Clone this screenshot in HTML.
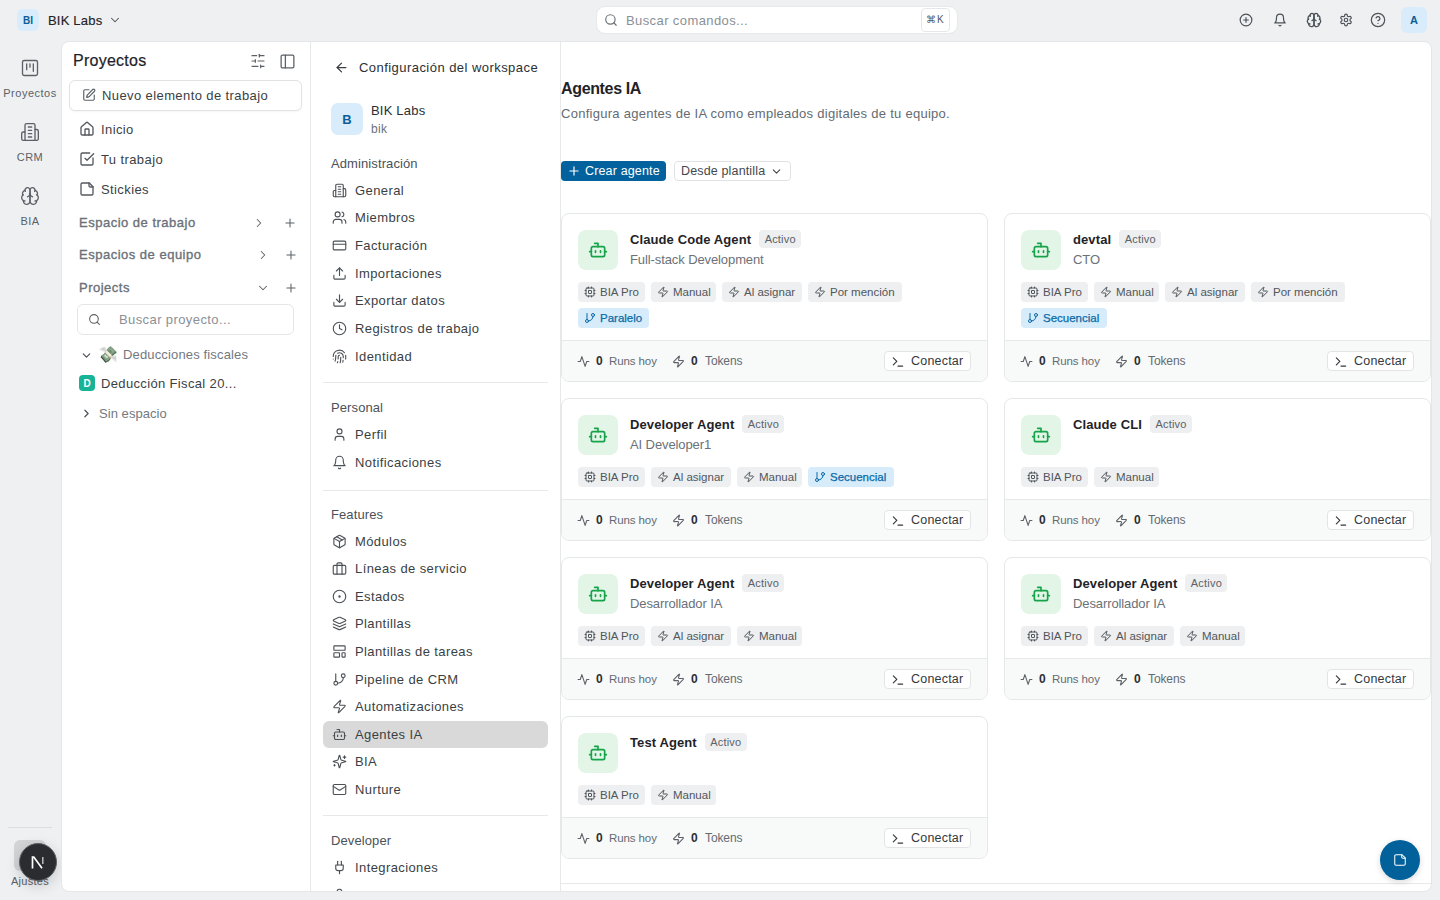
<!DOCTYPE html>
<html><head><meta charset="utf-8"><style>
*{box-sizing:border-box;margin:0;padding:0}
html,body{width:1440px;height:900px;overflow:hidden;background:#eff0f2;font-family:"Liberation Sans",sans-serif;}
.box{position:absolute}
.t{position:absolute;white-space:nowrap}
.ic{position:absolute;overflow:visible}
.card{position:absolute;border:1px solid #e5e8e8;border-radius:8px;background:#fff}
.tag{position:absolute;height:20px;border-radius:4px;display:flex;align-items:center;padding-left:6px;font-size:11.5px;letter-spacing:0px;white-space:nowrap}
.tag svg{width:12px;height:12px;margin-right:4px;flex:none}
</style></head><body>
<div class="box" style="left:17px;top:9px;width:22px;height:22px;border-radius:6px;background:#d8ecfb;"></div>
<div class="t " style="left:17px;top:13.5px;font-size:10px;line-height:13px;color:#0b5f98;font-weight:700;letter-spacing:0px;width:22px;text-align:center;">BI</div>
<div class="t " style="left:48px;top:11.5px;font-size:13px;line-height:17px;color:#1f2328;font-weight:400;letter-spacing:0.2px;-webkit-text-stroke:0.15px #1f2328;">BIK Labs</div>
<svg class="ic" style="left:108px;top:13px;width:14px;height:14px;color:#4b5157;" viewBox="0 0 24 24" fill="none" stroke="currentColor" stroke-width="1.8" stroke-linecap="round" stroke-linejoin="round"><path d="m6 9 6 6 6-6"/></svg>
<div class="box" style="left:596px;top:6px;width:362px;height:27.5px;border:1px solid #e6e8e9;border-radius:9px;background:#fff;"></div>
<svg class="ic" style="left:604px;top:13px;width:14px;height:14px;color:#6b7178;" viewBox="0 0 24 24" fill="none" stroke="currentColor" stroke-width="2" stroke-linecap="round" stroke-linejoin="round"><circle cx="11" cy="11" r="8"/><path d="m21 21-4.3-4.3"/></svg>
<div class="t " style="left:626px;top:11.5px;font-size:13px;line-height:17px;color:#8a9097;font-weight:400;letter-spacing:0.4px;">Buscar comandos...</div>
<div class="box" style="left:921px;top:8px;width:28.5px;height:23.5px;border:1px solid #e6e7ea;border-radius:4px;background:#fff;"></div>
<div class="t " style="left:921px;top:12.5px;font-size:10px;line-height:13px;color:#55595e;font-weight:400;letter-spacing:0.5px;width:28.5px;text-align:center;">⌘K</div>
<svg class="ic" style="left:1239.0px;top:13.0px;width:14px;height:14px;color:#4b5157;" viewBox="0 0 24 24" fill="none" stroke="currentColor" stroke-width="2" stroke-linecap="round" stroke-linejoin="round"><circle cx="12" cy="12" r="10"/><path d="M8 12h8"/><path d="M12 8v8"/></svg>
<svg class="ic" style="left:1273.0px;top:13.0px;width:14px;height:14px;color:#4b5157;" viewBox="0 0 24 24" fill="none" stroke="currentColor" stroke-width="2" stroke-linecap="round" stroke-linejoin="round"><path d="M6 8a6 6 0 0 1 12 0c0 7 3 9 3 9H3s3-2 3-9"/><path d="M10.3 21a1.94 1.94 0 0 0 3.4 0"/></svg>
<svg class="ic" style="left:1306.0px;top:12.0px;width:16px;height:16px;color:#4b5157;" viewBox="0 0 24 24" fill="none" stroke="currentColor" stroke-width="2" stroke-linecap="round" stroke-linejoin="round"><path d="M12 5a3 3 0 1 0-5.997.125 4 4 0 0 0-2.526 5.77 4 4 0 0 0 .556 6.588A4 4 0 1 0 12 18Z"/><path d="M12 5a3 3 0 1 1 5.997.125 4 4 0 0 1 2.526 5.77 4 4 0 0 1-.556 6.588A4 4 0 1 1 12 18Z"/><path d="M15 13a4.5 4.5 0 0 1-3-4 4.5 4.5 0 0 1-3 4"/><path d="M17.599 6.5a3 3 0 0 0 .399-1.375"/><path d="M6.003 5.125A3 3 0 0 0 6.401 6.5"/><path d="M3.477 10.896a4 4 0 0 1 .585-.396"/><path d="M19.938 10.5a4 4 0 0 1 .585.396"/><path d="M6 18a4 4 0 0 1-1.967-.516"/><path d="M19.967 17.484A4 4 0 0 1 18 18"/></svg>
<svg class="ic" style="left:1339.0px;top:13.0px;width:14px;height:14px;color:#4b5157;" viewBox="0 0 24 24" fill="none" stroke="currentColor" stroke-width="2" stroke-linecap="round" stroke-linejoin="round"><path d="M12.22 2h-.44a2 2 0 0 0-2 2v.18a2 2 0 0 1-1 1.73l-.43.25a2 2 0 0 1-2 0l-.15-.08a2 2 0 0 0-2.73.73l-.22.38a2 2 0 0 0 .73 2.73l.15.1a2 2 0 0 1 1 1.72v.51a2 2 0 0 1-1 1.74l-.15.09a2 2 0 0 0-.73 2.73l.22.38a2 2 0 0 0 2.730.73l.15-.08a2 2 0 0 1 2 0l.43.25a2 2 0 0 1 1 1.73V20a2 2 0 0 0 2 2h.44a2 2 0 0 0 2-2v-.18a2 2 0 0 1 1-1.73l.43-.25a2 2 0 0 1 2 0l.15.08a2 2 0 0 0 2.73-.73l.22-.39a2 2 0 0 0-.73-2.73l-.15-.08a2 2 0 0 1-1-1.74v-.5a2 2 0 0 1 1-1.74l.15-.09a2 2 0 0 0 .73-2.73l-.22-.38a2 2 0 0 0-2.73-.73l-.15.08a2 2 0 0 1-2 0l-.43-.25a2 2 0 0 1-1-1.73V4a2 2 0 0 0-2-2z"/><circle cx="12" cy="12" r="3"/></svg>
<svg class="ic" style="left:1370.0px;top:12.0px;width:16px;height:16px;color:#4b5157;" viewBox="0 0 24 24" fill="none" stroke="currentColor" stroke-width="1.8" stroke-linecap="round" stroke-linejoin="round"><circle cx="12" cy="12" r="10"/><path d="M9.09 9a3 3 0 0 1 5.83 1c0 2-3 3-3 3"/><path d="M12 17h.01"/></svg>
<div class="box" style="left:1401px;top:7px;width:26px;height:26px;border-radius:6px;background:#d8ecfb;"></div>
<div class="t " style="left:1401px;top:13.0px;font-size:11px;line-height:14px;color:#0b5f98;font-weight:700;letter-spacing:0px;width:26px;text-align:center;">A</div>
<svg class="ic" style="left:20px;top:57.5px;width:20px;height:20px;color:#5b6167;" viewBox="0 0 24 24" fill="none" stroke="currentColor" stroke-width="1.6" stroke-linecap="round" stroke-linejoin="round"><rect width="18" height="18" x="3" y="3" rx="2"/><path d="M8 7v7"/><path d="M12 7v4"/><path d="M16 7v9"/></svg>
<div class="t " style="left:0px;top:86.0px;font-size:11px;line-height:14px;color:#5b6167;font-weight:400;letter-spacing:0.5px;width:60px;text-align:center;">Proyectos</div>
<svg class="ic" style="left:20px;top:121.5px;width:20px;height:20px;color:#5b6167;" viewBox="0 0 24 24" fill="none" stroke="currentColor" stroke-width="1.6" stroke-linecap="round" stroke-linejoin="round"><path d="M6 22V4a2 2 0 0 1 2-2h8a2 2 0 0 1 2 2v18Z"/><path d="M6 12H4a2 2 0 0 0-2 2v6a2 2 0 0 0 2 2h2"/><path d="M18 9h2a2 2 0 0 1 2 2v9a2 2 0 0 1-2 2h-2"/><path d="M10 6h4"/><path d="M10 10h4"/><path d="M10 14h4"/><path d="M10 18h4"/></svg>
<div class="t " style="left:0px;top:150.0px;font-size:11px;line-height:14px;color:#5b6167;font-weight:400;letter-spacing:0.5px;width:60px;text-align:center;">CRM</div>
<svg class="ic" style="left:20px;top:185.5px;width:20px;height:20px;color:#5b6167;" viewBox="0 0 24 24" fill="none" stroke="currentColor" stroke-width="1.6" stroke-linecap="round" stroke-linejoin="round"><path d="M12 5a3 3 0 1 0-5.997.125 4 4 0 0 0-2.526 5.77 4 4 0 0 0 .556 6.588A4 4 0 1 0 12 18Z"/><path d="M12 5a3 3 0 1 1 5.997.125 4 4 0 0 1 2.526 5.77 4 4 0 0 1-.556 6.588A4 4 0 1 1 12 18Z"/><path d="M15 13a4.5 4.5 0 0 1-3-4 4.5 4.5 0 0 1-3 4"/><path d="M17.599 6.5a3 3 0 0 0 .399-1.375"/><path d="M6.003 5.125A3 3 0 0 0 6.401 6.5"/><path d="M3.477 10.896a4 4 0 0 1 .585-.396"/><path d="M19.938 10.5a4 4 0 0 1 .585.396"/><path d="M6 18a4 4 0 0 1-1.967-.516"/><path d="M19.967 17.484A4 4 0 0 1 18 18"/></svg>
<div class="t " style="left:0px;top:214.0px;font-size:11px;line-height:14px;color:#5b6167;font-weight:400;letter-spacing:0.5px;width:60px;text-align:center;">BIA</div>
<div class="box" style="left:8px;top:827px;width:44px;height:1px;background:#dcdee1;"></div>
<div class="box" style="left:14px;top:840px;width:32px;height:31px;border-radius:6px;background:#d4d5d7;"></div>
<div class="t " style="left:0px;top:874.0px;font-size:11px;line-height:14px;color:#5b6167;font-weight:400;letter-spacing:0.3px;width:60px;text-align:center;">Ajustes</div>
<div class="box" style="left:19px;top:843px;width:38px;height:38px;border-radius:50%;background:#2a2c2f;border:1px solid #5c5f63;box-shadow:0 4px 14px rgba(0,0,0,.18);"></div>
<svg class="ic" style="left:31px;top:856px;width:14px;height:13px" viewBox="0 0 14 13"><path d="M1.5 12.5V1h1.3l8.2 11.2" stroke="#fff" stroke-width="1.7" fill="none"/><path d="M11.8 1v7" stroke="#bbb" stroke-width="1.5"/></svg>
<div class="box" style="left:61px;top:41px;width:1371px;height:851px;border:1px solid #e4e6e7;border-radius:8px;background:#fff;"></div>
<div class="box" style="left:0;top:0;width:1440px;height:900px;clip-path:inset(42px 9px 9px 62px round 7px);">
<div class="box" style="left:310px;top:42px;width:1px;height:849px;background:#e7e9e9;"></div>
<div class="box" style="left:560px;top:42px;width:1px;height:849px;background:#e7e9e9;"></div>
<div class="t " style="left:73px;top:50.0px;font-size:16px;line-height:21px;color:#1f2328;font-weight:400;letter-spacing:0.25px;-webkit-text-stroke:0.2px #1f2328;">Proyectos</div>
<svg class="ic" style="left:250px;top:53px;width:16px;height:16px;color:#5b6167;" viewBox="0 0 24 24" fill="none" stroke="currentColor" stroke-width="1.8" stroke-linecap="round" stroke-linejoin="round"><line x1="21" x2="14" y1="4" y2="4"/><line x1="10" x2="3" y1="4" y2="4"/><line x1="21" x2="12" y1="12" y2="12"/><line x1="8" x2="3" y1="12" y2="12"/><line x1="21" x2="16" y1="20" y2="20"/><line x1="12" x2="3" y1="20" y2="20"/><line x1="14" x2="14" y1="2" y2="6"/><line x1="8" x2="8" y1="10" y2="14"/><line x1="16" x2="16" y1="18" y2="22"/></svg>
<svg class="ic" style="left:279px;top:53px;width:17px;height:17px;color:#5b6167;" viewBox="0 0 24 24" fill="none" stroke="currentColor" stroke-width="1.8" stroke-linecap="round" stroke-linejoin="round"><rect width="18" height="18" x="3" y="3" rx="2"/><path d="M9 3v18"/></svg>
<div class="box" style="left:69px;top:79.5px;width:233px;height:31px;border:1px solid #e0e2e3;border-radius:6px;background:#fff;box-shadow:0 1px 2px rgba(0,0,0,.04);"></div>
<svg class="ic" style="left:82px;top:88px;width:14px;height:14px;color:#5b6167;" viewBox="0 0 24 24" fill="none" stroke="currentColor" stroke-width="2" stroke-linecap="round" stroke-linejoin="round"><path d="M12 3H5a2 2 0 0 0-2 2v14a2 2 0 0 0 2 2h14a2 2 0 0 0 2-2v-7"/><path d="M18.375 2.625a1 1 0 0 1 3 3l-9.013 9.014a2 2 0 0 1-.853.505l-2.873.84a.5.5 0 0 1-.62-.62l.84-2.873a2 2 0 0 1 .506-.852z"/></svg>
<div class="t " style="left:102px;top:87.0px;font-size:13px;line-height:17px;color:#3a3f44;font-weight:400;letter-spacing:0.4px;">Nuevo elemento de trabajo</div>
<svg class="ic" style="left:79px;top:121px;width:16px;height:16px;color:#53595f;" viewBox="0 0 24 24" fill="none" stroke="currentColor" stroke-width="2" stroke-linecap="round" stroke-linejoin="round"><path d="M15 21v-8a1 1 0 0 0-1-1h-4a1 1 0 0 0-1 1v8"/><path d="M3 10a2 2 0 0 1 .709-1.528l7-5.999a2 2 0 0 1 2.582 0l7 5.999A2 2 0 0 1 21 10v9a2 2 0 0 1-2 2H5a2 2 0 0 1-2-2z"/></svg>
<div class="t " style="left:101px;top:120.5px;font-size:13px;line-height:17px;color:#3a3f44;font-weight:400;letter-spacing:0.4px;">Inicio</div>
<svg class="ic" style="left:79px;top:151px;width:16px;height:16px;color:#53595f;" viewBox="0 0 24 24" fill="none" stroke="currentColor" stroke-width="2" stroke-linecap="round" stroke-linejoin="round"><path d="M21 10.5V19a2 2 0 0 1-2 2H5a2 2 0 0 1-2-2V5a2 2 0 0 1 2-2h11"/><path d="m9 11 3 3L22 4"/></svg>
<div class="t " style="left:101px;top:150.5px;font-size:13px;line-height:17px;color:#3a3f44;font-weight:400;letter-spacing:0.4px;">Tu trabajo</div>
<svg class="ic" style="left:79px;top:181px;width:16px;height:16px;color:#53595f;" viewBox="0 0 24 24" fill="none" stroke="currentColor" stroke-width="2" stroke-linecap="round" stroke-linejoin="round"><path d="M15.5 3H5a2 2 0 0 0-2 2v14c0 1.1.9 2 2 2h14a2 2 0 0 0 2-2V8.5L15.5 3Z"/><path d="M15 3v4a2 2 0 0 0 2 2h4"/></svg>
<div class="t " style="left:101px;top:180.5px;font-size:13px;line-height:17px;color:#3a3f44;font-weight:400;letter-spacing:0.4px;">Stickies</div>
<div class="t " style="left:79px;top:214.0px;font-size:13px;line-height:17px;color:#6b7178;font-weight:400;letter-spacing:0.5px;-webkit-text-stroke:0.35px #6b7178;">Espacio de trabajo</div>
<svg class="ic" style="left:252px;top:215.5px;width:14px;height:14px;color:#5b6167;" viewBox="0 0 24 24" fill="none" stroke="currentColor" stroke-width="1.8" stroke-linecap="round" stroke-linejoin="round"><path d="m9 18 6-6-6-6"/></svg>
<svg class="ic" style="left:283px;top:215.5px;width:14px;height:14px;color:#5b6167;" viewBox="0 0 24 24" fill="none" stroke="currentColor" stroke-width="1.8" stroke-linecap="round" stroke-linejoin="round"><path d="M5 12h14"/><path d="M12 5v14"/></svg>
<div class="t " style="left:79px;top:246.0px;font-size:13px;line-height:17px;color:#6b7178;font-weight:400;letter-spacing:0.5px;-webkit-text-stroke:0.35px #6b7178;">Espacios de equipo</div>
<svg class="ic" style="left:256px;top:247.5px;width:14px;height:14px;color:#5b6167;" viewBox="0 0 24 24" fill="none" stroke="currentColor" stroke-width="1.8" stroke-linecap="round" stroke-linejoin="round"><path d="m9 18 6-6-6-6"/></svg>
<svg class="ic" style="left:284px;top:247.5px;width:14px;height:14px;color:#5b6167;" viewBox="0 0 24 24" fill="none" stroke="currentColor" stroke-width="1.8" stroke-linecap="round" stroke-linejoin="round"><path d="M5 12h14"/><path d="M12 5v14"/></svg>
<div class="t " style="left:79px;top:279.0px;font-size:13px;line-height:17px;color:#6b7178;font-weight:400;letter-spacing:0.5px;-webkit-text-stroke:0.35px #6b7178;">Projects</div>
<svg class="ic" style="left:256px;top:280.5px;width:14px;height:14px;color:#5b6167;" viewBox="0 0 24 24" fill="none" stroke="currentColor" stroke-width="1.8" stroke-linecap="round" stroke-linejoin="round"><path d="m6 9 6 6 6-6"/></svg>
<svg class="ic" style="left:284px;top:280.5px;width:14px;height:14px;color:#5b6167;" viewBox="0 0 24 24" fill="none" stroke="currentColor" stroke-width="1.8" stroke-linecap="round" stroke-linejoin="round"><path d="M5 12h14"/><path d="M12 5v14"/></svg>
<div class="box" style="left:77px;top:303.5px;width:217px;height:31.5px;border:1px solid #e5e7e7;border-radius:6px;background:#fff;"></div>
<svg class="ic" style="left:88px;top:313px;width:13px;height:13px;color:#5b6167;" viewBox="0 0 24 24" fill="none" stroke="currentColor" stroke-width="2" stroke-linecap="round" stroke-linejoin="round"><circle cx="11" cy="11" r="8"/><path d="m21 21-4.3-4.3"/></svg>
<div class="t " style="left:119px;top:311.0px;font-size:13px;line-height:17px;color:#8a9097;font-weight:400;letter-spacing:0.4px;">Buscar proyecto...</div>
<svg class="ic" style="left:79.5px;top:348.5px;width:13px;height:13px;color:#4b5157;" viewBox="0 0 24 24" fill="none" stroke="currentColor" stroke-width="2.2" stroke-linecap="round" stroke-linejoin="round"><path d="m6 9 6 6 6-6"/></svg>
<div class="t" style="left:97.5px;top:344.5px;font-size:16px;line-height:20px;filter:saturate(0.35);">💸</div>
<div class="t " style="left:123px;top:346.0px;font-size:13px;line-height:17px;color:#73797f;font-weight:400;letter-spacing:0.15px;">Deducciones fiscales</div>
<div class="box" style="left:79px;top:375px;width:16px;height:16px;border-radius:4px;background:#17b397;"></div>
<div class="t " style="left:79px;top:376.5px;font-size:10px;line-height:13px;color:#fff;font-weight:700;letter-spacing:0px;width:16px;text-align:center;">D</div>
<div class="t " style="left:101px;top:374.5px;font-size:13px;line-height:17px;color:#3a3f44;font-weight:400;letter-spacing:0.35px;">Deducción Fiscal 20...</div>
<svg class="ic" style="left:79.5px;top:407px;width:13px;height:13px;color:#4b5157;" viewBox="0 0 24 24" fill="none" stroke="currentColor" stroke-width="2.2" stroke-linecap="round" stroke-linejoin="round"><path d="m9 18 6-6-6-6"/></svg>
<div class="t " style="left:99px;top:404.5px;font-size:13px;line-height:17px;color:#73797f;font-weight:400;letter-spacing:0.05px;">Sin espacio</div>
<svg class="ic" style="left:333.5px;top:60px;width:15px;height:15px;color:#3a3f44;" viewBox="0 0 24 24" fill="none" stroke="currentColor" stroke-width="2" stroke-linecap="round" stroke-linejoin="round"><path d="m12 19-7-7 7-7"/><path d="M19 12H5"/></svg>
<div class="t " style="left:359px;top:59.0px;font-size:13px;line-height:17px;color:#2b3035;font-weight:400;letter-spacing:0.45px;">Configuración del workspace</div>
<div class="box" style="left:331px;top:103px;width:32px;height:32px;border-radius:7px;background:#d8ecfb;"></div>
<div class="t " style="left:331px;top:110.5px;font-size:13px;line-height:17px;color:#0b5f98;font-weight:700;letter-spacing:0px;width:32px;text-align:center;">B</div>
<div class="t " style="left:371px;top:102.0px;font-size:13px;line-height:17px;color:#2b3035;font-weight:400;letter-spacing:0.2px;">BIK Labs</div>
<div class="t " style="left:371px;top:120.5px;font-size:12px;line-height:16px;color:#6b7178;font-weight:400;letter-spacing:0.3px;">bik</div>
<div class="t " style="left:331px;top:155.2px;font-size:13px;line-height:17px;color:#4b5157;font-weight:400;letter-spacing:0.1px;">Administración</div>
<svg class="ic" style="left:331.5px;top:182.8px;width:15px;height:15px;color:#4b5157;" viewBox="0 0 24 24" fill="none" stroke="currentColor" stroke-width="1.8" stroke-linecap="round" stroke-linejoin="round"><path d="M6 22V4a2 2 0 0 1 2-2h8a2 2 0 0 1 2 2v18Z"/><path d="M6 12H4a2 2 0 0 0-2 2v6a2 2 0 0 0 2 2h2"/><path d="M18 9h2a2 2 0 0 1 2 2v9a2 2 0 0 1-2 2h-2"/><path d="M10 6h4"/><path d="M10 10h4"/><path d="M10 14h4"/><path d="M10 18h4"/></svg>
<div class="t " style="left:355px;top:181.8px;font-size:13px;line-height:17px;color:#3a3f44;font-weight:400;letter-spacing:0.4px;">General</div>
<svg class="ic" style="left:331.5px;top:210.47000000000003px;width:15px;height:15px;color:#4b5157;" viewBox="0 0 24 24" fill="none" stroke="currentColor" stroke-width="1.8" stroke-linecap="round" stroke-linejoin="round"><path d="M16 21v-2a4 4 0 0 0-4-4H6a4 4 0 0 0-4 4v2"/><circle cx="9" cy="7" r="4"/><path d="M22 21v-2a4 4 0 0 0-3-3.87"/><path d="M16 3.13a4 4 0 0 1 0 7.75"/></svg>
<div class="t " style="left:355px;top:209.47000000000003px;font-size:13px;line-height:17px;color:#3a3f44;font-weight:400;letter-spacing:0.4px;">Miembros</div>
<svg class="ic" style="left:331.5px;top:238.14000000000001px;width:15px;height:15px;color:#4b5157;" viewBox="0 0 24 24" fill="none" stroke="currentColor" stroke-width="1.8" stroke-linecap="round" stroke-linejoin="round"><rect width="20" height="14" x="2" y="5" rx="2"/><line x1="2" x2="22" y1="10" y2="10"/></svg>
<div class="t " style="left:355px;top:237.14000000000001px;font-size:13px;line-height:17px;color:#3a3f44;font-weight:400;letter-spacing:0.4px;">Facturación</div>
<svg class="ic" style="left:331.5px;top:265.81px;width:15px;height:15px;color:#4b5157;" viewBox="0 0 24 24" fill="none" stroke="currentColor" stroke-width="1.8" stroke-linecap="round" stroke-linejoin="round"><path d="M21 15v4a2 2 0 0 1-2 2H5a2 2 0 0 1-2-2v-4"/><polyline points="17 8 12 3 7 8"/><line x1="12" x2="12" y1="3" y2="15"/></svg>
<div class="t " style="left:355px;top:264.81px;font-size:13px;line-height:17px;color:#3a3f44;font-weight:400;letter-spacing:0.4px;">Importaciones</div>
<svg class="ic" style="left:331.5px;top:293.48px;width:15px;height:15px;color:#4b5157;" viewBox="0 0 24 24" fill="none" stroke="currentColor" stroke-width="1.8" stroke-linecap="round" stroke-linejoin="round"><path d="M21 15v4a2 2 0 0 1-2 2H5a2 2 0 0 1-2-2v-4"/><polyline points="7 10 12 15 17 10"/><line x1="12" x2="12" y1="15" y2="3"/></svg>
<div class="t " style="left:355px;top:292.48px;font-size:13px;line-height:17px;color:#3a3f44;font-weight:400;letter-spacing:0.4px;">Exportar datos</div>
<svg class="ic" style="left:331.5px;top:321.15000000000003px;width:15px;height:15px;color:#4b5157;" viewBox="0 0 24 24" fill="none" stroke="currentColor" stroke-width="1.8" stroke-linecap="round" stroke-linejoin="round"><circle cx="12" cy="12" r="10"/><polyline points="12 6 12 12 16 14"/></svg>
<div class="t " style="left:355px;top:320.15000000000003px;font-size:13px;line-height:17px;color:#3a3f44;font-weight:400;letter-spacing:0.4px;">Registros de trabajo</div>
<svg class="ic" style="left:331.5px;top:348.82000000000005px;width:15px;height:15px;color:#4b5157;" viewBox="0 0 24 24" fill="none" stroke="currentColor" stroke-width="1.8" stroke-linecap="round" stroke-linejoin="round"><path d="M12 10a2 2 0 0 0-2 2c0 1.02-.1 2.51-.26 4"/><path d="M14 13.12c0 2.38 0 6.38-1 8.88"/><path d="M17.29 21.02c.12-.6.43-2.3.5-3.02"/><path d="M2 12a10 10 0 0 1 18-6"/><path d="M2 16h.01"/><path d="M21.8 16c.2-2 .131-5.354 0-6"/><path d="M5 19.5C5.5 18 6 15 6 12a6 6 0 0 1 .34-2"/><path d="M8.65 22c.21-.66.45-1.32.57-2"/><path d="M9 6.8a6 6 0 0 1 9 5.2v2"/></svg>
<div class="t " style="left:355px;top:347.82000000000005px;font-size:13px;line-height:17px;color:#3a3f44;font-weight:400;letter-spacing:0.4px;">Identidad</div>
<div class="box" style="left:323px;top:382px;width:225px;height:1px;background:#e7e9e9;"></div>
<div class="t " style="left:331px;top:399.1px;font-size:13px;line-height:17px;color:#4b5157;font-weight:400;letter-spacing:0.1px;">Personal</div>
<svg class="ic" style="left:331.5px;top:426.7px;width:15px;height:15px;color:#4b5157;" viewBox="0 0 24 24" fill="none" stroke="currentColor" stroke-width="1.8" stroke-linecap="round" stroke-linejoin="round"><path d="M19 21v-2a4 4 0 0 0-4-4H9a4 4 0 0 0-4 4v2"/><circle cx="12" cy="7" r="4"/></svg>
<div class="t " style="left:355px;top:425.7px;font-size:13px;line-height:17px;color:#3a3f44;font-weight:400;letter-spacing:0.4px;">Perfil</div>
<svg class="ic" style="left:331.5px;top:454.5px;width:15px;height:15px;color:#4b5157;" viewBox="0 0 24 24" fill="none" stroke="currentColor" stroke-width="1.8" stroke-linecap="round" stroke-linejoin="round"><path d="M6 8a6 6 0 0 1 12 0c0 7 3 9 3 9H3s3-2 3-9"/><path d="M10.3 21a1.94 1.94 0 0 0 3.4 0"/></svg>
<div class="t " style="left:355px;top:453.5px;font-size:13px;line-height:17px;color:#3a3f44;font-weight:400;letter-spacing:0.4px;">Notificaciones</div>
<div class="box" style="left:323px;top:489.5px;width:225px;height:1px;background:#e7e9e9;"></div>
<div class="t " style="left:331px;top:506.20000000000005px;font-size:13px;line-height:17px;color:#4b5157;font-weight:400;letter-spacing:0.1px;">Features</div>
<svg class="ic" style="left:331.5px;top:533.8px;width:15px;height:15px;color:#4b5157;" viewBox="0 0 24 24" fill="none" stroke="currentColor" stroke-width="1.8" stroke-linecap="round" stroke-linejoin="round"><path d="m7.5 4.27 9 5.15"/><path d="M21 8a2 2 0 0 0-1-1.73l-7-4a2 2 0 0 0-2 0l-7 4A2 2 0 0 0 3 8v8a2 2 0 0 0 1 1.73l7 4a2 2 0 0 0 2 0l7-4A2 2 0 0 0 21 16Z"/><path d="m3.3 7 8.7 5 8.7-5"/><path d="M12 22V12"/></svg>
<div class="t " style="left:355px;top:532.8px;font-size:13px;line-height:17px;color:#3a3f44;font-weight:400;letter-spacing:0.4px;">Módulos</div>
<svg class="ic" style="left:331.5px;top:561.3599999999999px;width:15px;height:15px;color:#4b5157;" viewBox="0 0 24 24" fill="none" stroke="currentColor" stroke-width="1.8" stroke-linecap="round" stroke-linejoin="round"><rect width="20" height="14" x="2" y="7" rx="2" ry="2"/><path d="M16 21V5a2 2 0 0 0-2-2h-4a2 2 0 0 0-2 2v16"/></svg>
<div class="t " style="left:355px;top:560.3599999999999px;font-size:13px;line-height:17px;color:#3a3f44;font-weight:400;letter-spacing:0.4px;">Líneas de servicio</div>
<svg class="ic" style="left:331.5px;top:588.92px;width:15px;height:15px;color:#4b5157;" viewBox="0 0 24 24" fill="none" stroke="currentColor" stroke-width="1.8" stroke-linecap="round" stroke-linejoin="round"><circle cx="12" cy="12" r="10"/><circle cx="12" cy="12" r="1"/></svg>
<div class="t " style="left:355px;top:587.92px;font-size:13px;line-height:17px;color:#3a3f44;font-weight:400;letter-spacing:0.4px;">Estados</div>
<svg class="ic" style="left:331.5px;top:616.4799999999999px;width:15px;height:15px;color:#4b5157;" viewBox="0 0 24 24" fill="none" stroke="currentColor" stroke-width="1.8" stroke-linecap="round" stroke-linejoin="round"><path d="m12.83 2.18a2 2 0 0 0-1.66 0L2.6 6.08a1 1 0 0 0 0 1.83l8.58 3.91a2 2 0 0 0 1.66 0l8.58-3.9a1 1 0 0 0 0-1.83Z"/><path d="m22 17.65-9.17 4.16a2 2 0 0 1-1.66 0L2 17.65"/><path d="m22 12.65-9.17 4.16a2 2 0 0 1-1.66 0L2 12.65"/></svg>
<div class="t " style="left:355px;top:615.4799999999999px;font-size:13px;line-height:17px;color:#3a3f44;font-weight:400;letter-spacing:0.4px;">Plantillas</div>
<svg class="ic" style="left:331.5px;top:644.04px;width:15px;height:15px;color:#4b5157;" viewBox="0 0 24 24" fill="none" stroke="currentColor" stroke-width="1.8" stroke-linecap="round" stroke-linejoin="round"><rect width="18" height="7" x="3" y="3" rx="1"/><rect width="9" height="7" x="3" y="14" rx="1"/><rect width="5" height="7" x="16" y="14" rx="1"/></svg>
<div class="t " style="left:355px;top:643.04px;font-size:13px;line-height:17px;color:#3a3f44;font-weight:400;letter-spacing:0.4px;">Plantillas de tareas</div>
<svg class="ic" style="left:331.5px;top:671.5999999999999px;width:15px;height:15px;color:#4b5157;" viewBox="0 0 24 24" fill="none" stroke="currentColor" stroke-width="1.8" stroke-linecap="round" stroke-linejoin="round"><line x1="6" x2="6" y1="3" y2="15"/><circle cx="18" cy="6" r="3"/><circle cx="6" cy="18" r="3"/><path d="M18 9a9 9 0 0 1-9 9"/></svg>
<div class="t " style="left:355px;top:670.5999999999999px;font-size:13px;line-height:17px;color:#3a3f44;font-weight:400;letter-spacing:0.4px;">Pipeline de CRM</div>
<svg class="ic" style="left:331.5px;top:699.16px;width:15px;height:15px;color:#4b5157;" viewBox="0 0 24 24" fill="none" stroke="currentColor" stroke-width="1.8" stroke-linecap="round" stroke-linejoin="round"><path d="M4 14a1 1 0 0 1-.78-1.63l9.9-10.2a.5.5 0 0 1 .86.46l-1.92 6.02A1 1 0 0 0 13 10h7a1 1 0 0 1 .78 1.63l-9.9 10.2a.5.5 0 0 1-.86-.46l1.92-6.02A1 1 0 0 0 11 14z"/></svg>
<div class="t " style="left:355px;top:698.16px;font-size:13px;line-height:17px;color:#3a3f44;font-weight:400;letter-spacing:0.4px;">Automatizaciones</div>
<div class="box" style="left:323px;top:720.7199999999999px;width:225px;height:27px;border-radius:6px;background:#d9d9d9;"></div>
<svg class="ic" style="left:331.5px;top:726.7199999999999px;width:15px;height:15px;color:#4b5157;" viewBox="0 0 24 24" fill="none" stroke="currentColor" stroke-width="1.8" stroke-linecap="round" stroke-linejoin="round"><path d="M12 8V4H8"/><rect width="16" height="12" x="4" y="8" rx="2"/><path d="M2 14h2"/><path d="M20 14h2"/><path d="M15 13v2"/><path d="M9 13v2"/></svg>
<div class="t " style="left:355px;top:725.7199999999999px;font-size:13px;line-height:17px;color:#3a3f44;font-weight:400;letter-spacing:0.4px;">Agentes IA</div>
<svg class="ic" style="left:331.5px;top:754.28px;width:15px;height:15px;color:#4b5157;" viewBox="0 0 24 24" fill="none" stroke="currentColor" stroke-width="1.8" stroke-linecap="round" stroke-linejoin="round"><path d="M9.937 15.5A2 2 0 0 0 8.5 14.063l-6.135-1.582a.5.5 0 0 1 0-.962L8.5 9.936A2 2 0 0 0 9.937 8.5l1.582-6.135a.5.5 0 0 1 .963 0L14.063 8.5A2 2 0 0 0 15.5 9.937l6.135 1.581a.5.5 0 0 1 0 .964L15.5 14.063a2 2 0 0 0-1.437 1.437l-1.582 6.135a.5.5 0 0 1-.963 0z"/><path d="M20 3v4"/><path d="M22 5h-4"/><path d="M4 17v2"/><path d="M5 18H3"/></svg>
<div class="t " style="left:355px;top:753.28px;font-size:13px;line-height:17px;color:#3a3f44;font-weight:400;letter-spacing:0.4px;">BIA</div>
<svg class="ic" style="left:331.5px;top:781.8399999999999px;width:15px;height:15px;color:#4b5157;" viewBox="0 0 24 24" fill="none" stroke="currentColor" stroke-width="1.8" stroke-linecap="round" stroke-linejoin="round"><rect width="20" height="16" x="2" y="4" rx="2"/><path d="m22 7-8.97 5.7a1.94 1.94 0 0 1-2.06 0L2 7"/></svg>
<div class="t " style="left:355px;top:780.8399999999999px;font-size:13px;line-height:17px;color:#3a3f44;font-weight:400;letter-spacing:0.4px;">Nurture</div>
<div class="box" style="left:323px;top:815px;width:225px;height:1px;background:#e7e9e9;"></div>
<div class="t " style="left:331px;top:831.5px;font-size:13px;line-height:17px;color:#4b5157;font-weight:400;letter-spacing:0.1px;">Developer</div>
<svg class="ic" style="left:331.5px;top:859.5px;width:15px;height:15px;color:#4b5157;" viewBox="0 0 24 24" fill="none" stroke="currentColor" stroke-width="1.8" stroke-linecap="round" stroke-linejoin="round"><path d="M12 22v-5"/><path d="M9 8V2"/><path d="M15 8V2"/><path d="M18 8v5a4 4 0 0 1-4 4h-4a4 4 0 0 1-4-4V8Z"/></svg>
<div class="t " style="left:355px;top:858.5px;font-size:13px;line-height:17px;color:#3a3f44;font-weight:400;letter-spacing:0.4px;">Integraciones</div>
<svg class="ic" style="left:331.5px;top:888.0px;width:15px;height:15px;color:#4b5157;" viewBox="0 0 24 24" fill="none" stroke="currentColor" stroke-width="1.8" stroke-linecap="round" stroke-linejoin="round"><path d="M18 16.98h-5.99c-1.1 0-1.95.94-2.48 1.9A4 4 0 0 1 2 17c.01-.7.2-1.4.57-2"/><path d="m6 17 3.13-5.78c.53-.97.1-2.18-.5-3.1a4 4 0 1 1 6.89-4.06"/><path d="m12 6 3.13 5.73C15.66 12.7 16.9 13 18 13a4 4 0 0 1 0 8"/></svg>
<div class="t " style="left:355px;top:887.0px;font-size:13px;line-height:17px;color:#3a3f44;font-weight:400;letter-spacing:0.4px;">Webhooks</div>
<div class="t " style="left:561px;top:77.5px;font-size:16px;line-height:21px;color:#1f2328;font-weight:700;letter-spacing:-0.35px;">Agentes IA</div>
<div class="t " style="left:561px;top:104.5px;font-size:13px;line-height:17px;color:#646b72;font-weight:400;letter-spacing:0.27px;">Configura agentes de IA como empleados digitales de tu equipo.</div>
<div class="box" style="left:561px;top:161px;width:105px;height:20px;border-radius:4px;background:#03629d;"></div>
<svg class="ic" style="left:567px;top:164px;width:14px;height:14px;color:#fff;" viewBox="0 0 24 24" fill="none" stroke="currentColor" stroke-width="2" stroke-linecap="round" stroke-linejoin="round"><path d="M5 12h14"/><path d="M12 5v14"/></svg>
<div class="t " style="left:585px;top:163.0px;font-size:12.5px;line-height:16px;color:#fff;font-weight:400;letter-spacing:0.15px;">Crear agente</div>
<div class="box" style="left:674px;top:161px;width:117px;height:20px;border:1px solid #e0e2e3;border-radius:4px;background:#fff;"></div>
<div class="t " style="left:681px;top:163.0px;font-size:12.5px;line-height:16px;color:#43484d;font-weight:400;letter-spacing:0.15px;">Desde plantilla</div>
<svg class="ic" style="left:769.5px;top:164.5px;width:13px;height:13px;color:#43484d;" viewBox="0 0 24 24" fill="none" stroke="currentColor" stroke-width="2.1" stroke-linecap="round" stroke-linejoin="round"><path d="m6 9 6 6 6-6"/></svg>
<div class="card" style="left:561px;top:213px;width:427px;height:169px;"></div>
<div class="box" style="left:562px;top:340px;width:425px;height:41px;background:#f8f9f9;border-top:1px solid #e7e9e9;border-radius:0 0 7px 7px;"></div>
<div class="box" style="left:578px;top:230px;width:40px;height:40px;border-radius:8px;background:#e2f5e7;"></div>
<svg class="ic" style="left:588px;top:240px;width:20px;height:20px;color:#16a34a;" viewBox="0 0 24 24" fill="none" stroke="currentColor" stroke-width="2" stroke-linecap="round" stroke-linejoin="round"><path d="M12 8V4H8"/><rect width="16" height="12" x="4" y="8" rx="2"/><path d="M2 14h2"/><path d="M20 14h2"/><path d="M15 13v2"/><path d="M9 13v2"/></svg>
<div class="box" style="left:630px;top:230px;height:18px;display:flex;align-items:center;white-space:nowrap;"><span style="font-size:13px;font-weight:700;letter-spacing:0.1px;color:#1f2328;line-height:18px;position:relative;top:0.5px">Claude Code Agent</span><span style="margin-left:8px;height:18px;padding:0 5.5px;border-radius:4px;background:#eeeff0;font-size:11px;letter-spacing:0.2px;color:#5b6167;line-height:18px">Activo</span></div>
<div class="t " style="left:630px;top:251.0px;font-size:13px;line-height:17px;color:#6b7178;font-weight:400;letter-spacing:-0.1px;">Full-stack Development</div>
<div class="tag" style="left:578px;top:282px;width:67px;background:#eeeff0;color:#50565c;"><svg viewBox="0 0 24 24" fill="none" stroke="currentColor" stroke-width="2" stroke-linecap="round" stroke-linejoin="round"><rect width="16" height="16" x="4" y="4" rx="2"/><rect width="6" height="6" x="9" y="9" rx="1"/><path d="M15 2v2"/><path d="M15 20v2"/><path d="M2 15h2"/><path d="M2 9h2"/><path d="M20 15h2"/><path d="M20 9h2"/><path d="M9 2v2"/><path d="M9 20v2"/></svg><span>BIA Pro</span></div>
<div class="tag" style="left:651px;top:282px;width:65px;background:#eeeff0;color:#50565c;"><svg viewBox="0 0 24 24" fill="none" stroke="currentColor" stroke-width="2" stroke-linecap="round" stroke-linejoin="round"><path d="M4 14a1 1 0 0 1-.78-1.63l9.9-10.2a.5.5 0 0 1 .86.46l-1.92 6.02A1 1 0 0 0 13 10h7a1 1 0 0 1 .78 1.63l-9.9 10.2a.5.5 0 0 1-.86-.46l1.92-6.02A1 1 0 0 0 11 14z"/></svg><span>Manual</span></div>
<div class="tag" style="left:722px;top:282px;width:80px;background:#eeeff0;color:#50565c;"><svg viewBox="0 0 24 24" fill="none" stroke="currentColor" stroke-width="2" stroke-linecap="round" stroke-linejoin="round"><path d="M4 14a1 1 0 0 1-.78-1.63l9.9-10.2a.5.5 0 0 1 .86.46l-1.92 6.02A1 1 0 0 0 13 10h7a1 1 0 0 1 .78 1.63l-9.9 10.2a.5.5 0 0 1-.86-.46l1.92-6.02A1 1 0 0 0 11 14z"/></svg><span>Al asignar</span></div>
<div class="tag" style="left:808px;top:282px;width:94px;background:#eeeff0;color:#50565c;"><svg viewBox="0 0 24 24" fill="none" stroke="currentColor" stroke-width="2" stroke-linecap="round" stroke-linejoin="round"><path d="M4 14a1 1 0 0 1-.78-1.63l9.9-10.2a.5.5 0 0 1 .86.46l-1.92 6.02A1 1 0 0 0 13 10h7a1 1 0 0 1 .78 1.63l-9.9 10.2a.5.5 0 0 1-.86-.46l1.92-6.02A1 1 0 0 0 11 14z"/></svg><span>Por mención</span></div>
<div class="tag" style="left:578px;top:308px;width:71px;background:#d6ecfb;color:#0b6aa6;-webkit-text-stroke:0.25px #0b6aa6;"><svg viewBox="0 0 24 24" fill="none" stroke="currentColor" stroke-width="2" stroke-linecap="round" stroke-linejoin="round"><line x1="6" x2="6" y1="3" y2="15"/><circle cx="18" cy="6" r="3"/><circle cx="6" cy="18" r="3"/><path d="M18 9a9 9 0 0 1-9 9"/></svg><span>Paralelo</span></div>
<svg class="ic" style="left:577px;top:354.5px;width:13px;height:13px;color:#5b6167;" viewBox="0 0 24 24" fill="none" stroke="currentColor" stroke-width="2" stroke-linecap="round" stroke-linejoin="round"><path d="M22 12h-4l-3 9L9 3l-3 9H2"/></svg>
<div class="t " style="left:596px;top:353.0px;font-size:12px;line-height:16px;color:#2b3035;font-weight:700;letter-spacing:0px;">0</div>
<div class="t " style="left:609px;top:353.5px;font-size:11.5px;line-height:15px;color:#646b72;font-weight:400;letter-spacing:-0.1px;">Runs hoy</div>
<svg class="ic" style="left:672px;top:354.5px;width:13px;height:13px;color:#5b6167;" viewBox="0 0 24 24" fill="none" stroke="currentColor" stroke-width="2" stroke-linecap="round" stroke-linejoin="round"><path d="M4 14a1 1 0 0 1-.78-1.63l9.9-10.2a.5.5 0 0 1 .86.46l-1.92 6.02A1 1 0 0 0 13 10h7a1 1 0 0 1 .78 1.63l-9.9 10.2a.5.5 0 0 1-.86-.46l1.92-6.02A1 1 0 0 0 11 14z"/></svg>
<div class="t " style="left:691px;top:353.0px;font-size:12px;line-height:16px;color:#2b3035;font-weight:700;letter-spacing:0px;">0</div>
<div class="t " style="left:705px;top:353.0px;font-size:12px;line-height:16px;color:#646b72;font-weight:400;letter-spacing:-0.1px;">Tokens</div>
<div class="box" style="left:884px;top:351px;width:87px;height:19.5px;border:1px solid #e3e5e5;border-radius:4px;background:#fff;"></div>
<svg class="ic" style="left:891px;top:354.5px;width:14px;height:14px;color:#33383d;" viewBox="0 0 24 24" fill="none" stroke="currentColor" stroke-width="2" stroke-linecap="round" stroke-linejoin="round"><polyline points="4 17 10 11 4 5"/><line x1="12" x2="20" y1="19" y2="19"/></svg>
<div class="t " style="left:911px;top:353.0px;font-size:12.5px;line-height:16px;color:#33383d;font-weight:400;letter-spacing:0.2px;">Conectar</div>
<div class="card" style="left:1004px;top:213px;width:427px;height:169px;"></div>
<div class="box" style="left:1005px;top:340px;width:425px;height:41px;background:#f8f9f9;border-top:1px solid #e7e9e9;border-radius:0 0 7px 7px;"></div>
<div class="box" style="left:1021px;top:230px;width:40px;height:40px;border-radius:8px;background:#e2f5e7;"></div>
<svg class="ic" style="left:1031px;top:240px;width:20px;height:20px;color:#16a34a;" viewBox="0 0 24 24" fill="none" stroke="currentColor" stroke-width="2" stroke-linecap="round" stroke-linejoin="round"><path d="M12 8V4H8"/><rect width="16" height="12" x="4" y="8" rx="2"/><path d="M2 14h2"/><path d="M20 14h2"/><path d="M15 13v2"/><path d="M9 13v2"/></svg>
<div class="box" style="left:1073px;top:230px;height:18px;display:flex;align-items:center;white-space:nowrap;"><span style="font-size:13px;font-weight:700;letter-spacing:0.1px;color:#1f2328;line-height:18px;position:relative;top:0.5px">devtal</span><span style="margin-left:8px;height:18px;padding:0 5.5px;border-radius:4px;background:#eeeff0;font-size:11px;letter-spacing:0.2px;color:#5b6167;line-height:18px">Activo</span></div>
<div class="t " style="left:1073px;top:251.0px;font-size:13px;line-height:17px;color:#6b7178;font-weight:400;letter-spacing:-0.1px;">CTO</div>
<div class="tag" style="left:1021px;top:282px;width:67px;background:#eeeff0;color:#50565c;"><svg viewBox="0 0 24 24" fill="none" stroke="currentColor" stroke-width="2" stroke-linecap="round" stroke-linejoin="round"><rect width="16" height="16" x="4" y="4" rx="2"/><rect width="6" height="6" x="9" y="9" rx="1"/><path d="M15 2v2"/><path d="M15 20v2"/><path d="M2 15h2"/><path d="M2 9h2"/><path d="M20 15h2"/><path d="M20 9h2"/><path d="M9 2v2"/><path d="M9 20v2"/></svg><span>BIA Pro</span></div>
<div class="tag" style="left:1094px;top:282px;width:65px;background:#eeeff0;color:#50565c;"><svg viewBox="0 0 24 24" fill="none" stroke="currentColor" stroke-width="2" stroke-linecap="round" stroke-linejoin="round"><path d="M4 14a1 1 0 0 1-.78-1.63l9.9-10.2a.5.5 0 0 1 .86.46l-1.92 6.02A1 1 0 0 0 13 10h7a1 1 0 0 1 .78 1.63l-9.9 10.2a.5.5 0 0 1-.86-.46l1.92-6.02A1 1 0 0 0 11 14z"/></svg><span>Manual</span></div>
<div class="tag" style="left:1165px;top:282px;width:80px;background:#eeeff0;color:#50565c;"><svg viewBox="0 0 24 24" fill="none" stroke="currentColor" stroke-width="2" stroke-linecap="round" stroke-linejoin="round"><path d="M4 14a1 1 0 0 1-.78-1.63l9.9-10.2a.5.5 0 0 1 .86.46l-1.92 6.02A1 1 0 0 0 13 10h7a1 1 0 0 1 .78 1.63l-9.9 10.2a.5.5 0 0 1-.86-.46l1.92-6.02A1 1 0 0 0 11 14z"/></svg><span>Al asignar</span></div>
<div class="tag" style="left:1251px;top:282px;width:94px;background:#eeeff0;color:#50565c;"><svg viewBox="0 0 24 24" fill="none" stroke="currentColor" stroke-width="2" stroke-linecap="round" stroke-linejoin="round"><path d="M4 14a1 1 0 0 1-.78-1.63l9.9-10.2a.5.5 0 0 1 .86.46l-1.92 6.02A1 1 0 0 0 13 10h7a1 1 0 0 1 .78 1.63l-9.9 10.2a.5.5 0 0 1-.86-.46l1.92-6.02A1 1 0 0 0 11 14z"/></svg><span>Por mención</span></div>
<div class="tag" style="left:1021px;top:308px;width:86px;background:#d6ecfb;color:#0b6aa6;-webkit-text-stroke:0.25px #0b6aa6;"><svg viewBox="0 0 24 24" fill="none" stroke="currentColor" stroke-width="2" stroke-linecap="round" stroke-linejoin="round"><line x1="6" x2="6" y1="3" y2="15"/><circle cx="18" cy="6" r="3"/><circle cx="6" cy="18" r="3"/><path d="M18 9a9 9 0 0 1-9 9"/></svg><span>Secuencial</span></div>
<svg class="ic" style="left:1020px;top:354.5px;width:13px;height:13px;color:#5b6167;" viewBox="0 0 24 24" fill="none" stroke="currentColor" stroke-width="2" stroke-linecap="round" stroke-linejoin="round"><path d="M22 12h-4l-3 9L9 3l-3 9H2"/></svg>
<div class="t " style="left:1039px;top:353.0px;font-size:12px;line-height:16px;color:#2b3035;font-weight:700;letter-spacing:0px;">0</div>
<div class="t " style="left:1052px;top:353.5px;font-size:11.5px;line-height:15px;color:#646b72;font-weight:400;letter-spacing:-0.1px;">Runs hoy</div>
<svg class="ic" style="left:1115px;top:354.5px;width:13px;height:13px;color:#5b6167;" viewBox="0 0 24 24" fill="none" stroke="currentColor" stroke-width="2" stroke-linecap="round" stroke-linejoin="round"><path d="M4 14a1 1 0 0 1-.78-1.63l9.9-10.2a.5.5 0 0 1 .86.46l-1.92 6.02A1 1 0 0 0 13 10h7a1 1 0 0 1 .78 1.63l-9.9 10.2a.5.5 0 0 1-.86-.46l1.92-6.02A1 1 0 0 0 11 14z"/></svg>
<div class="t " style="left:1134px;top:353.0px;font-size:12px;line-height:16px;color:#2b3035;font-weight:700;letter-spacing:0px;">0</div>
<div class="t " style="left:1148px;top:353.0px;font-size:12px;line-height:16px;color:#646b72;font-weight:400;letter-spacing:-0.1px;">Tokens</div>
<div class="box" style="left:1327px;top:351px;width:87px;height:19.5px;border:1px solid #e3e5e5;border-radius:4px;background:#fff;"></div>
<svg class="ic" style="left:1334px;top:354.5px;width:14px;height:14px;color:#33383d;" viewBox="0 0 24 24" fill="none" stroke="currentColor" stroke-width="2" stroke-linecap="round" stroke-linejoin="round"><polyline points="4 17 10 11 4 5"/><line x1="12" x2="20" y1="19" y2="19"/></svg>
<div class="t " style="left:1354px;top:353.0px;font-size:12.5px;line-height:16px;color:#33383d;font-weight:400;letter-spacing:0.2px;">Conectar</div>
<div class="card" style="left:561px;top:398px;width:427px;height:143px;"></div>
<div class="box" style="left:562px;top:499px;width:425px;height:41px;background:#f8f9f9;border-top:1px solid #e7e9e9;border-radius:0 0 7px 7px;"></div>
<div class="box" style="left:578px;top:415px;width:40px;height:40px;border-radius:8px;background:#e2f5e7;"></div>
<svg class="ic" style="left:588px;top:425px;width:20px;height:20px;color:#16a34a;" viewBox="0 0 24 24" fill="none" stroke="currentColor" stroke-width="2" stroke-linecap="round" stroke-linejoin="round"><path d="M12 8V4H8"/><rect width="16" height="12" x="4" y="8" rx="2"/><path d="M2 14h2"/><path d="M20 14h2"/><path d="M15 13v2"/><path d="M9 13v2"/></svg>
<div class="box" style="left:630px;top:415px;height:18px;display:flex;align-items:center;white-space:nowrap;"><span style="font-size:13px;font-weight:700;letter-spacing:0.1px;color:#1f2328;line-height:18px;position:relative;top:0.5px">Developer Agent</span><span style="margin-left:8px;height:18px;padding:0 5.5px;border-radius:4px;background:#eeeff0;font-size:11px;letter-spacing:0.2px;color:#5b6167;line-height:18px">Activo</span></div>
<div class="t " style="left:630px;top:436.0px;font-size:13px;line-height:17px;color:#6b7178;font-weight:400;letter-spacing:-0.1px;">AI Developer1</div>
<div class="tag" style="left:578px;top:467px;width:67px;background:#eeeff0;color:#50565c;"><svg viewBox="0 0 24 24" fill="none" stroke="currentColor" stroke-width="2" stroke-linecap="round" stroke-linejoin="round"><rect width="16" height="16" x="4" y="4" rx="2"/><rect width="6" height="6" x="9" y="9" rx="1"/><path d="M15 2v2"/><path d="M15 20v2"/><path d="M2 15h2"/><path d="M2 9h2"/><path d="M20 15h2"/><path d="M20 9h2"/><path d="M9 2v2"/><path d="M9 20v2"/></svg><span>BIA Pro</span></div>
<div class="tag" style="left:651px;top:467px;width:80px;background:#eeeff0;color:#50565c;"><svg viewBox="0 0 24 24" fill="none" stroke="currentColor" stroke-width="2" stroke-linecap="round" stroke-linejoin="round"><path d="M4 14a1 1 0 0 1-.78-1.63l9.9-10.2a.5.5 0 0 1 .86.46l-1.92 6.02A1 1 0 0 0 13 10h7a1 1 0 0 1 .78 1.63l-9.9 10.2a.5.5 0 0 1-.86-.46l1.92-6.02A1 1 0 0 0 11 14z"/></svg><span>Al asignar</span></div>
<div class="tag" style="left:737px;top:467px;width:65px;background:#eeeff0;color:#50565c;"><svg viewBox="0 0 24 24" fill="none" stroke="currentColor" stroke-width="2" stroke-linecap="round" stroke-linejoin="round"><path d="M4 14a1 1 0 0 1-.78-1.63l9.9-10.2a.5.5 0 0 1 .86.46l-1.92 6.02A1 1 0 0 0 13 10h7a1 1 0 0 1 .78 1.63l-9.9 10.2a.5.5 0 0 1-.86-.46l1.92-6.02A1 1 0 0 0 11 14z"/></svg><span>Manual</span></div>
<div class="tag" style="left:808px;top:467px;width:86px;background:#d6ecfb;color:#0b6aa6;-webkit-text-stroke:0.25px #0b6aa6;"><svg viewBox="0 0 24 24" fill="none" stroke="currentColor" stroke-width="2" stroke-linecap="round" stroke-linejoin="round"><line x1="6" x2="6" y1="3" y2="15"/><circle cx="18" cy="6" r="3"/><circle cx="6" cy="18" r="3"/><path d="M18 9a9 9 0 0 1-9 9"/></svg><span>Secuencial</span></div>
<svg class="ic" style="left:577px;top:513.5px;width:13px;height:13px;color:#5b6167;" viewBox="0 0 24 24" fill="none" stroke="currentColor" stroke-width="2" stroke-linecap="round" stroke-linejoin="round"><path d="M22 12h-4l-3 9L9 3l-3 9H2"/></svg>
<div class="t " style="left:596px;top:512.0px;font-size:12px;line-height:16px;color:#2b3035;font-weight:700;letter-spacing:0px;">0</div>
<div class="t " style="left:609px;top:512.5px;font-size:11.5px;line-height:15px;color:#646b72;font-weight:400;letter-spacing:-0.1px;">Runs hoy</div>
<svg class="ic" style="left:672px;top:513.5px;width:13px;height:13px;color:#5b6167;" viewBox="0 0 24 24" fill="none" stroke="currentColor" stroke-width="2" stroke-linecap="round" stroke-linejoin="round"><path d="M4 14a1 1 0 0 1-.78-1.63l9.9-10.2a.5.5 0 0 1 .86.46l-1.92 6.02A1 1 0 0 0 13 10h7a1 1 0 0 1 .78 1.63l-9.9 10.2a.5.5 0 0 1-.86-.46l1.92-6.02A1 1 0 0 0 11 14z"/></svg>
<div class="t " style="left:691px;top:512.0px;font-size:12px;line-height:16px;color:#2b3035;font-weight:700;letter-spacing:0px;">0</div>
<div class="t " style="left:705px;top:512.0px;font-size:12px;line-height:16px;color:#646b72;font-weight:400;letter-spacing:-0.1px;">Tokens</div>
<div class="box" style="left:884px;top:510px;width:87px;height:19.5px;border:1px solid #e3e5e5;border-radius:4px;background:#fff;"></div>
<svg class="ic" style="left:891px;top:513.5px;width:14px;height:14px;color:#33383d;" viewBox="0 0 24 24" fill="none" stroke="currentColor" stroke-width="2" stroke-linecap="round" stroke-linejoin="round"><polyline points="4 17 10 11 4 5"/><line x1="12" x2="20" y1="19" y2="19"/></svg>
<div class="t " style="left:911px;top:512.0px;font-size:12.5px;line-height:16px;color:#33383d;font-weight:400;letter-spacing:0.2px;">Conectar</div>
<div class="card" style="left:1004px;top:398px;width:427px;height:143px;"></div>
<div class="box" style="left:1005px;top:499px;width:425px;height:41px;background:#f8f9f9;border-top:1px solid #e7e9e9;border-radius:0 0 7px 7px;"></div>
<div class="box" style="left:1021px;top:415px;width:40px;height:40px;border-radius:8px;background:#e2f5e7;"></div>
<svg class="ic" style="left:1031px;top:425px;width:20px;height:20px;color:#16a34a;" viewBox="0 0 24 24" fill="none" stroke="currentColor" stroke-width="2" stroke-linecap="round" stroke-linejoin="round"><path d="M12 8V4H8"/><rect width="16" height="12" x="4" y="8" rx="2"/><path d="M2 14h2"/><path d="M20 14h2"/><path d="M15 13v2"/><path d="M9 13v2"/></svg>
<div class="box" style="left:1073px;top:415px;height:18px;display:flex;align-items:center;white-space:nowrap;"><span style="font-size:13px;font-weight:700;letter-spacing:0.1px;color:#1f2328;line-height:18px;position:relative;top:0.5px">Claude CLI</span><span style="margin-left:8px;height:18px;padding:0 5.5px;border-radius:4px;background:#eeeff0;font-size:11px;letter-spacing:0.2px;color:#5b6167;line-height:18px">Activo</span></div>
<div class="tag" style="left:1021px;top:467px;width:67px;background:#eeeff0;color:#50565c;"><svg viewBox="0 0 24 24" fill="none" stroke="currentColor" stroke-width="2" stroke-linecap="round" stroke-linejoin="round"><rect width="16" height="16" x="4" y="4" rx="2"/><rect width="6" height="6" x="9" y="9" rx="1"/><path d="M15 2v2"/><path d="M15 20v2"/><path d="M2 15h2"/><path d="M2 9h2"/><path d="M20 15h2"/><path d="M20 9h2"/><path d="M9 2v2"/><path d="M9 20v2"/></svg><span>BIA Pro</span></div>
<div class="tag" style="left:1094px;top:467px;width:65px;background:#eeeff0;color:#50565c;"><svg viewBox="0 0 24 24" fill="none" stroke="currentColor" stroke-width="2" stroke-linecap="round" stroke-linejoin="round"><path d="M4 14a1 1 0 0 1-.78-1.63l9.9-10.2a.5.5 0 0 1 .86.46l-1.92 6.02A1 1 0 0 0 13 10h7a1 1 0 0 1 .78 1.63l-9.9 10.2a.5.5 0 0 1-.86-.46l1.92-6.02A1 1 0 0 0 11 14z"/></svg><span>Manual</span></div>
<svg class="ic" style="left:1020px;top:513.5px;width:13px;height:13px;color:#5b6167;" viewBox="0 0 24 24" fill="none" stroke="currentColor" stroke-width="2" stroke-linecap="round" stroke-linejoin="round"><path d="M22 12h-4l-3 9L9 3l-3 9H2"/></svg>
<div class="t " style="left:1039px;top:512.0px;font-size:12px;line-height:16px;color:#2b3035;font-weight:700;letter-spacing:0px;">0</div>
<div class="t " style="left:1052px;top:512.5px;font-size:11.5px;line-height:15px;color:#646b72;font-weight:400;letter-spacing:-0.1px;">Runs hoy</div>
<svg class="ic" style="left:1115px;top:513.5px;width:13px;height:13px;color:#5b6167;" viewBox="0 0 24 24" fill="none" stroke="currentColor" stroke-width="2" stroke-linecap="round" stroke-linejoin="round"><path d="M4 14a1 1 0 0 1-.78-1.63l9.9-10.2a.5.5 0 0 1 .86.46l-1.92 6.02A1 1 0 0 0 13 10h7a1 1 0 0 1 .78 1.63l-9.9 10.2a.5.5 0 0 1-.86-.46l1.92-6.02A1 1 0 0 0 11 14z"/></svg>
<div class="t " style="left:1134px;top:512.0px;font-size:12px;line-height:16px;color:#2b3035;font-weight:700;letter-spacing:0px;">0</div>
<div class="t " style="left:1148px;top:512.0px;font-size:12px;line-height:16px;color:#646b72;font-weight:400;letter-spacing:-0.1px;">Tokens</div>
<div class="box" style="left:1327px;top:510px;width:87px;height:19.5px;border:1px solid #e3e5e5;border-radius:4px;background:#fff;"></div>
<svg class="ic" style="left:1334px;top:513.5px;width:14px;height:14px;color:#33383d;" viewBox="0 0 24 24" fill="none" stroke="currentColor" stroke-width="2" stroke-linecap="round" stroke-linejoin="round"><polyline points="4 17 10 11 4 5"/><line x1="12" x2="20" y1="19" y2="19"/></svg>
<div class="t " style="left:1354px;top:512.0px;font-size:12.5px;line-height:16px;color:#33383d;font-weight:400;letter-spacing:0.2px;">Conectar</div>
<div class="card" style="left:561px;top:557px;width:427px;height:143px;"></div>
<div class="box" style="left:562px;top:658px;width:425px;height:41px;background:#f8f9f9;border-top:1px solid #e7e9e9;border-radius:0 0 7px 7px;"></div>
<div class="box" style="left:578px;top:574px;width:40px;height:40px;border-radius:8px;background:#e2f5e7;"></div>
<svg class="ic" style="left:588px;top:584px;width:20px;height:20px;color:#16a34a;" viewBox="0 0 24 24" fill="none" stroke="currentColor" stroke-width="2" stroke-linecap="round" stroke-linejoin="round"><path d="M12 8V4H8"/><rect width="16" height="12" x="4" y="8" rx="2"/><path d="M2 14h2"/><path d="M20 14h2"/><path d="M15 13v2"/><path d="M9 13v2"/></svg>
<div class="box" style="left:630px;top:574px;height:18px;display:flex;align-items:center;white-space:nowrap;"><span style="font-size:13px;font-weight:700;letter-spacing:0.1px;color:#1f2328;line-height:18px;position:relative;top:0.5px">Developer Agent</span><span style="margin-left:8px;height:18px;padding:0 5.5px;border-radius:4px;background:#eeeff0;font-size:11px;letter-spacing:0.2px;color:#5b6167;line-height:18px">Activo</span></div>
<div class="t " style="left:630px;top:595.0px;font-size:13px;line-height:17px;color:#6b7178;font-weight:400;letter-spacing:-0.1px;">Desarrollador IA</div>
<div class="tag" style="left:578px;top:626px;width:67px;background:#eeeff0;color:#50565c;"><svg viewBox="0 0 24 24" fill="none" stroke="currentColor" stroke-width="2" stroke-linecap="round" stroke-linejoin="round"><rect width="16" height="16" x="4" y="4" rx="2"/><rect width="6" height="6" x="9" y="9" rx="1"/><path d="M15 2v2"/><path d="M15 20v2"/><path d="M2 15h2"/><path d="M2 9h2"/><path d="M20 15h2"/><path d="M20 9h2"/><path d="M9 2v2"/><path d="M9 20v2"/></svg><span>BIA Pro</span></div>
<div class="tag" style="left:651px;top:626px;width:80px;background:#eeeff0;color:#50565c;"><svg viewBox="0 0 24 24" fill="none" stroke="currentColor" stroke-width="2" stroke-linecap="round" stroke-linejoin="round"><path d="M4 14a1 1 0 0 1-.78-1.63l9.9-10.2a.5.5 0 0 1 .86.46l-1.92 6.02A1 1 0 0 0 13 10h7a1 1 0 0 1 .78 1.63l-9.9 10.2a.5.5 0 0 1-.86-.46l1.92-6.02A1 1 0 0 0 11 14z"/></svg><span>Al asignar</span></div>
<div class="tag" style="left:737px;top:626px;width:65px;background:#eeeff0;color:#50565c;"><svg viewBox="0 0 24 24" fill="none" stroke="currentColor" stroke-width="2" stroke-linecap="round" stroke-linejoin="round"><path d="M4 14a1 1 0 0 1-.78-1.63l9.9-10.2a.5.5 0 0 1 .86.46l-1.92 6.02A1 1 0 0 0 13 10h7a1 1 0 0 1 .78 1.63l-9.9 10.2a.5.5 0 0 1-.86-.46l1.92-6.02A1 1 0 0 0 11 14z"/></svg><span>Manual</span></div>
<svg class="ic" style="left:577px;top:672.5px;width:13px;height:13px;color:#5b6167;" viewBox="0 0 24 24" fill="none" stroke="currentColor" stroke-width="2" stroke-linecap="round" stroke-linejoin="round"><path d="M22 12h-4l-3 9L9 3l-3 9H2"/></svg>
<div class="t " style="left:596px;top:671.0px;font-size:12px;line-height:16px;color:#2b3035;font-weight:700;letter-spacing:0px;">0</div>
<div class="t " style="left:609px;top:671.5px;font-size:11.5px;line-height:15px;color:#646b72;font-weight:400;letter-spacing:-0.1px;">Runs hoy</div>
<svg class="ic" style="left:672px;top:672.5px;width:13px;height:13px;color:#5b6167;" viewBox="0 0 24 24" fill="none" stroke="currentColor" stroke-width="2" stroke-linecap="round" stroke-linejoin="round"><path d="M4 14a1 1 0 0 1-.78-1.63l9.9-10.2a.5.5 0 0 1 .86.46l-1.92 6.02A1 1 0 0 0 13 10h7a1 1 0 0 1 .78 1.63l-9.9 10.2a.5.5 0 0 1-.86-.46l1.92-6.02A1 1 0 0 0 11 14z"/></svg>
<div class="t " style="left:691px;top:671.0px;font-size:12px;line-height:16px;color:#2b3035;font-weight:700;letter-spacing:0px;">0</div>
<div class="t " style="left:705px;top:671.0px;font-size:12px;line-height:16px;color:#646b72;font-weight:400;letter-spacing:-0.1px;">Tokens</div>
<div class="box" style="left:884px;top:669px;width:87px;height:19.5px;border:1px solid #e3e5e5;border-radius:4px;background:#fff;"></div>
<svg class="ic" style="left:891px;top:672.5px;width:14px;height:14px;color:#33383d;" viewBox="0 0 24 24" fill="none" stroke="currentColor" stroke-width="2" stroke-linecap="round" stroke-linejoin="round"><polyline points="4 17 10 11 4 5"/><line x1="12" x2="20" y1="19" y2="19"/></svg>
<div class="t " style="left:911px;top:671.0px;font-size:12.5px;line-height:16px;color:#33383d;font-weight:400;letter-spacing:0.2px;">Conectar</div>
<div class="card" style="left:1004px;top:557px;width:427px;height:143px;"></div>
<div class="box" style="left:1005px;top:658px;width:425px;height:41px;background:#f8f9f9;border-top:1px solid #e7e9e9;border-radius:0 0 7px 7px;"></div>
<div class="box" style="left:1021px;top:574px;width:40px;height:40px;border-radius:8px;background:#e2f5e7;"></div>
<svg class="ic" style="left:1031px;top:584px;width:20px;height:20px;color:#16a34a;" viewBox="0 0 24 24" fill="none" stroke="currentColor" stroke-width="2" stroke-linecap="round" stroke-linejoin="round"><path d="M12 8V4H8"/><rect width="16" height="12" x="4" y="8" rx="2"/><path d="M2 14h2"/><path d="M20 14h2"/><path d="M15 13v2"/><path d="M9 13v2"/></svg>
<div class="box" style="left:1073px;top:574px;height:18px;display:flex;align-items:center;white-space:nowrap;"><span style="font-size:13px;font-weight:700;letter-spacing:0.1px;color:#1f2328;line-height:18px;position:relative;top:0.5px">Developer Agent</span><span style="margin-left:8px;height:18px;padding:0 5.5px;border-radius:4px;background:#eeeff0;font-size:11px;letter-spacing:0.2px;color:#5b6167;line-height:18px">Activo</span></div>
<div class="t " style="left:1073px;top:595.0px;font-size:13px;line-height:17px;color:#6b7178;font-weight:400;letter-spacing:-0.1px;">Desarrollador IA</div>
<div class="tag" style="left:1021px;top:626px;width:67px;background:#eeeff0;color:#50565c;"><svg viewBox="0 0 24 24" fill="none" stroke="currentColor" stroke-width="2" stroke-linecap="round" stroke-linejoin="round"><rect width="16" height="16" x="4" y="4" rx="2"/><rect width="6" height="6" x="9" y="9" rx="1"/><path d="M15 2v2"/><path d="M15 20v2"/><path d="M2 15h2"/><path d="M2 9h2"/><path d="M20 15h2"/><path d="M20 9h2"/><path d="M9 2v2"/><path d="M9 20v2"/></svg><span>BIA Pro</span></div>
<div class="tag" style="left:1094px;top:626px;width:80px;background:#eeeff0;color:#50565c;"><svg viewBox="0 0 24 24" fill="none" stroke="currentColor" stroke-width="2" stroke-linecap="round" stroke-linejoin="round"><path d="M4 14a1 1 0 0 1-.78-1.63l9.9-10.2a.5.5 0 0 1 .86.46l-1.92 6.02A1 1 0 0 0 13 10h7a1 1 0 0 1 .78 1.63l-9.9 10.2a.5.5 0 0 1-.86-.46l1.92-6.02A1 1 0 0 0 11 14z"/></svg><span>Al asignar</span></div>
<div class="tag" style="left:1180px;top:626px;width:65px;background:#eeeff0;color:#50565c;"><svg viewBox="0 0 24 24" fill="none" stroke="currentColor" stroke-width="2" stroke-linecap="round" stroke-linejoin="round"><path d="M4 14a1 1 0 0 1-.78-1.63l9.9-10.2a.5.5 0 0 1 .86.46l-1.92 6.02A1 1 0 0 0 13 10h7a1 1 0 0 1 .78 1.63l-9.9 10.2a.5.5 0 0 1-.86-.46l1.92-6.02A1 1 0 0 0 11 14z"/></svg><span>Manual</span></div>
<svg class="ic" style="left:1020px;top:672.5px;width:13px;height:13px;color:#5b6167;" viewBox="0 0 24 24" fill="none" stroke="currentColor" stroke-width="2" stroke-linecap="round" stroke-linejoin="round"><path d="M22 12h-4l-3 9L9 3l-3 9H2"/></svg>
<div class="t " style="left:1039px;top:671.0px;font-size:12px;line-height:16px;color:#2b3035;font-weight:700;letter-spacing:0px;">0</div>
<div class="t " style="left:1052px;top:671.5px;font-size:11.5px;line-height:15px;color:#646b72;font-weight:400;letter-spacing:-0.1px;">Runs hoy</div>
<svg class="ic" style="left:1115px;top:672.5px;width:13px;height:13px;color:#5b6167;" viewBox="0 0 24 24" fill="none" stroke="currentColor" stroke-width="2" stroke-linecap="round" stroke-linejoin="round"><path d="M4 14a1 1 0 0 1-.78-1.63l9.9-10.2a.5.5 0 0 1 .86.46l-1.92 6.02A1 1 0 0 0 13 10h7a1 1 0 0 1 .78 1.63l-9.9 10.2a.5.5 0 0 1-.86-.46l1.92-6.02A1 1 0 0 0 11 14z"/></svg>
<div class="t " style="left:1134px;top:671.0px;font-size:12px;line-height:16px;color:#2b3035;font-weight:700;letter-spacing:0px;">0</div>
<div class="t " style="left:1148px;top:671.0px;font-size:12px;line-height:16px;color:#646b72;font-weight:400;letter-spacing:-0.1px;">Tokens</div>
<div class="box" style="left:1327px;top:669px;width:87px;height:19.5px;border:1px solid #e3e5e5;border-radius:4px;background:#fff;"></div>
<svg class="ic" style="left:1334px;top:672.5px;width:14px;height:14px;color:#33383d;" viewBox="0 0 24 24" fill="none" stroke="currentColor" stroke-width="2" stroke-linecap="round" stroke-linejoin="round"><polyline points="4 17 10 11 4 5"/><line x1="12" x2="20" y1="19" y2="19"/></svg>
<div class="t " style="left:1354px;top:671.0px;font-size:12.5px;line-height:16px;color:#33383d;font-weight:400;letter-spacing:0.2px;">Conectar</div>
<div class="card" style="left:561px;top:716px;width:427px;height:143px;"></div>
<div class="box" style="left:562px;top:817px;width:425px;height:41px;background:#f8f9f9;border-top:1px solid #e7e9e9;border-radius:0 0 7px 7px;"></div>
<div class="box" style="left:578px;top:733px;width:40px;height:40px;border-radius:8px;background:#e2f5e7;"></div>
<svg class="ic" style="left:588px;top:743px;width:20px;height:20px;color:#16a34a;" viewBox="0 0 24 24" fill="none" stroke="currentColor" stroke-width="2" stroke-linecap="round" stroke-linejoin="round"><path d="M12 8V4H8"/><rect width="16" height="12" x="4" y="8" rx="2"/><path d="M2 14h2"/><path d="M20 14h2"/><path d="M15 13v2"/><path d="M9 13v2"/></svg>
<div class="box" style="left:630px;top:733px;height:18px;display:flex;align-items:center;white-space:nowrap;"><span style="font-size:13px;font-weight:700;letter-spacing:0.1px;color:#1f2328;line-height:18px;position:relative;top:0.5px">Test Agent</span><span style="margin-left:8px;height:18px;padding:0 5.5px;border-radius:4px;background:#eeeff0;font-size:11px;letter-spacing:0.2px;color:#5b6167;line-height:18px">Activo</span></div>
<div class="tag" style="left:578px;top:785px;width:67px;background:#eeeff0;color:#50565c;"><svg viewBox="0 0 24 24" fill="none" stroke="currentColor" stroke-width="2" stroke-linecap="round" stroke-linejoin="round"><rect width="16" height="16" x="4" y="4" rx="2"/><rect width="6" height="6" x="9" y="9" rx="1"/><path d="M15 2v2"/><path d="M15 20v2"/><path d="M2 15h2"/><path d="M2 9h2"/><path d="M20 15h2"/><path d="M20 9h2"/><path d="M9 2v2"/><path d="M9 20v2"/></svg><span>BIA Pro</span></div>
<div class="tag" style="left:651px;top:785px;width:65px;background:#eeeff0;color:#50565c;"><svg viewBox="0 0 24 24" fill="none" stroke="currentColor" stroke-width="2" stroke-linecap="round" stroke-linejoin="round"><path d="M4 14a1 1 0 0 1-.78-1.63l9.9-10.2a.5.5 0 0 1 .86.46l-1.92 6.02A1 1 0 0 0 13 10h7a1 1 0 0 1 .78 1.63l-9.9 10.2a.5.5 0 0 1-.86-.46l1.92-6.02A1 1 0 0 0 11 14z"/></svg><span>Manual</span></div>
<svg class="ic" style="left:577px;top:831.5px;width:13px;height:13px;color:#5b6167;" viewBox="0 0 24 24" fill="none" stroke="currentColor" stroke-width="2" stroke-linecap="round" stroke-linejoin="round"><path d="M22 12h-4l-3 9L9 3l-3 9H2"/></svg>
<div class="t " style="left:596px;top:830.0px;font-size:12px;line-height:16px;color:#2b3035;font-weight:700;letter-spacing:0px;">0</div>
<div class="t " style="left:609px;top:830.5px;font-size:11.5px;line-height:15px;color:#646b72;font-weight:400;letter-spacing:-0.1px;">Runs hoy</div>
<svg class="ic" style="left:672px;top:831.5px;width:13px;height:13px;color:#5b6167;" viewBox="0 0 24 24" fill="none" stroke="currentColor" stroke-width="2" stroke-linecap="round" stroke-linejoin="round"><path d="M4 14a1 1 0 0 1-.78-1.63l9.9-10.2a.5.5 0 0 1 .86.46l-1.92 6.02A1 1 0 0 0 13 10h7a1 1 0 0 1 .78 1.63l-9.9 10.2a.5.5 0 0 1-.86-.46l1.92-6.02A1 1 0 0 0 11 14z"/></svg>
<div class="t " style="left:691px;top:830.0px;font-size:12px;line-height:16px;color:#2b3035;font-weight:700;letter-spacing:0px;">0</div>
<div class="t " style="left:705px;top:830.0px;font-size:12px;line-height:16px;color:#646b72;font-weight:400;letter-spacing:-0.1px;">Tokens</div>
<div class="box" style="left:884px;top:828px;width:87px;height:19.5px;border:1px solid #e3e5e5;border-radius:4px;background:#fff;"></div>
<svg class="ic" style="left:891px;top:831.5px;width:14px;height:14px;color:#33383d;" viewBox="0 0 24 24" fill="none" stroke="currentColor" stroke-width="2" stroke-linecap="round" stroke-linejoin="round"><polyline points="4 17 10 11 4 5"/><line x1="12" x2="20" y1="19" y2="19"/></svg>
<div class="t " style="left:911px;top:830.0px;font-size:12.5px;line-height:16px;color:#33383d;font-weight:400;letter-spacing:0.2px;">Conectar</div>
<div class="box" style="left:561px;top:883px;width:870px;height:1px;background:#e7e9e9;"></div>
</div>
<div class="box" style="left:1380px;top:840px;width:40px;height:40px;border-radius:50%;background:#02609a;box-shadow:0 2px 6px rgba(0,0,0,.15);"></div>
<svg class="ic" style="left:1393px;top:853px;width:14px;height:14px;color:#fff;" viewBox="0 0 24 24" fill="none" stroke="currentColor" stroke-width="1.8" stroke-linecap="round" stroke-linejoin="round"><path d="M15.5 3H5a2 2 0 0 0-2 2v14c0 1.1.9 2 2 2h14a2 2 0 0 0 2-2V8.5L15.5 3Z"/><path d="M15 3v4a2 2 0 0 0 2 2h4"/></svg>
</body></html>
